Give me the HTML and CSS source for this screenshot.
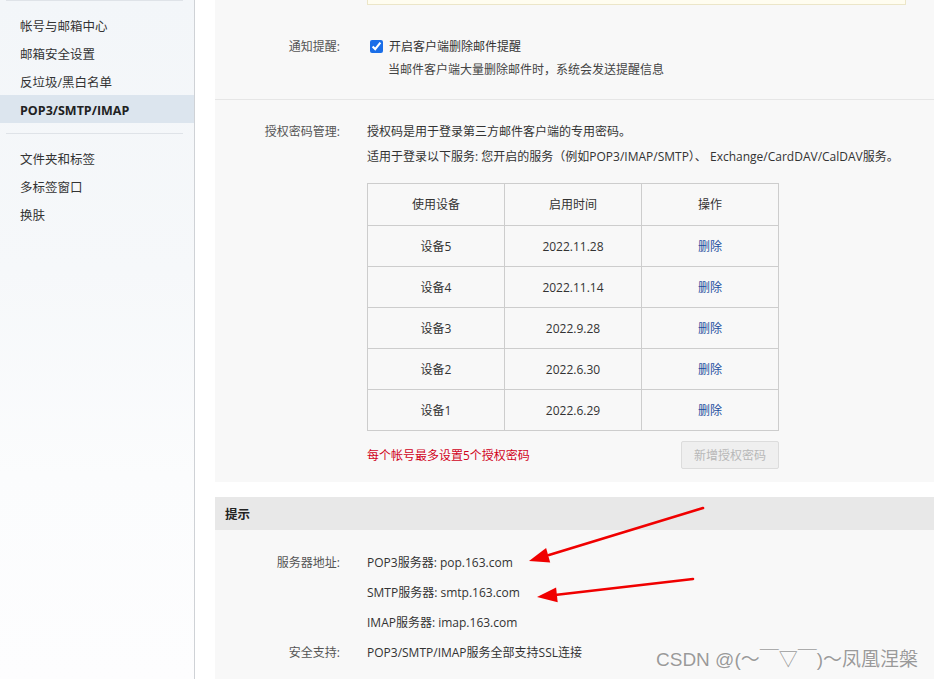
FILE: index.html
```html
<!DOCTYPE html>
<html lang="zh-CN">
<head>
<meta charset="utf-8">
<title>POP3/SMTP/IMAP 设置</title>
<link rel="stylesheet" href="styles.css">
</head>
<body>
<div class="app">
  <aside class="sidebar">
    <div class="side-line"></div>
    <ul class="side-group">
      <li class="side-item">帐号与邮箱中心</li>
      <li class="side-item">邮箱安全设置</li>
      <li class="side-item">反垃圾/黑白名单</li>
      <li class="side-item active">POP3/SMTP/IMAP</li>
    </ul>
    <div class="side-line mid"></div>
    <ul class="side-group">
      <li class="side-item">文件夹和标签</li>
      <li class="side-item">多标签窗口</li>
      <li class="side-item">换肤</li>
    </ul>
  </aside>
  <main class="main">
    <section class="panel">
      <div class="notice-box"></div>
      <div class="row row-notify">
        <div class="label">通知提醒:</div>
        <div class="content">
          <label class="check-line"><input type="checkbox" class="check" checked> 开启客户端删除邮件提醒</label>
          <div class="sub">当邮件客户端大量删除邮件时，系统会发送提醒信息</div>
        </div>
      </div>
      <div class="row row-auth">
        <div class="label">授权密码管理:</div>
        <div class="content">
          <p class="line">授权码是用于登录第三方邮件客户端的专用密码。</p>
          <p class="line">适用于登录以下服务: 您开启的服务（例如POP3/IMAP/SMTP）、 Exchange/CardDAV/CalDAV服务。</p>
          <table class="devices">
            <thead>
              <tr><th>使用设备</th><th>启用时间</th><th>操作</th></tr>
            </thead>
            <tbody>
              <tr><td>设备5</td><td>2022.11.28</td><td><a class="del">删除</a></td></tr>
              <tr><td>设备4</td><td>2022.11.14</td><td><a class="del">删除</a></td></tr>
              <tr><td>设备3</td><td>2022.9.28</td><td><a class="del">删除</a></td></tr>
              <tr><td>设备2</td><td>2022.6.30</td><td><a class="del">删除</a></td></tr>
              <tr><td>设备1</td><td>2022.6.29</td><td><a class="del">删除</a></td></tr>
            </tbody>
          </table>
          <div class="table-foot">
            <span class="warn">每个帐号最多设置5个授权密码</span>
            <button class="btn-disabled" disabled>新增授权密码</button>
          </div>
        </div>
      </div>
    </section>
    <section class="tips">
      <div class="tips-head">提示</div>
      <div class="tips-body">
        <div class="row row-tip">
          <div class="label">服务器地址:</div>
          <div class="content">
            <p class="tline">POP3服务器: pop.163.com</p>
            <p class="tline">SMTP服务器: smtp.163.com</p>
            <p class="tline">IMAP服务器: imap.163.com</p>
          </div>
        </div>
        <div class="row row-tip">
          <div class="label">安全支持:</div>
          <div class="content">
            <p class="tline">POP3/SMTP/IMAP服务全部支持SSL连接</p>
          </div>
        </div>
      </div>
    </section>
  </main>
</div>
<svg class="arrows" width="934" height="679" viewBox="0 0 934 679" aria-hidden="true">
  <line x1="703" y1="508" x2="549" y2="555" stroke="#f00000" stroke-width="2.6" stroke-linecap="round"/>
  <polygon points="529,561 550.2,562.4 546.1,548" fill="#f00000"/>
  <line x1="693" y1="579" x2="557" y2="594.7" stroke="#f00000" stroke-width="2.6" stroke-linecap="round"/>
  <polygon points="537,597 557.7,602.2 556.1,587.4" fill="#f00000"/>
</svg>
<div class="watermark">CSDN @(～￣▽￣)～凤凰涅槃</div>
</body>
</html>
```
FILE: styles.css
```css
* { box-sizing: border-box; }
html, body { margin: 0; padding: 0; }
body {
  width: 934px;
  height: 679px;
  overflow: hidden;
  background: #fff;
  font-family: "Open Sans", "Noto Sans CJK SC", sans-serif;
  font-size: 12px;
  color: #333;
  position: relative;
}
.app {
  display: flex;
  height: 679px;
}
.sidebar {
  width: 195px;
  flex: none;
  border-right: 1px solid #cfd2d6;
  background: linear-gradient(180deg, #f3f6f9 0%, #f6f8fa 40%, #fbfcfd 70%, #fdfdfe 100%);
}
.side-line {
  height: 1px;
  margin: 0 11px 0 6px;
  background: #dfe3e8;
}
.side-line.mid { margin-top: 10px; margin-bottom: 10px; }
.side-group {
  list-style: none;
  margin: 0;
  padding: 0;
}
.side-group:first-of-type { padding-top: 10px; }
.side-item {
  height: 28px;
  line-height: 28px;
  padding-top: 2px;
  padding-left: 20px;
  font-size: 12.5px;
  color: #333;
}
.side-item.active {
  background: #dce5ee;
  font-weight: bold;
  color: #222;
}
.main {
  flex: 1;
  padding-left: 20px;
  display: flex;
  flex-direction: column;
  gap: 15px;
}
.panel {
  background: #f8f8f8;
  padding-bottom: 13px;
}
.notice-box {
  margin-left: 152px;
  width: 539px;
  height: 5px;
  border: 1px solid #ece6c8;
  border-top: none;
  background: #fffdf0;
}
.row {
  display: flex;
  gap: 27px;
}
.label {
  width: 125px;
  flex: none;
  text-align: right;
  color: #555;
}
.content { flex: none; }
.row-notify {
  padding: 30px 0 18px;
  border-bottom: 1px solid #e6e6e6;
  line-height: 23px;
}
.check-line {
  display: flex;
  align-items: center;
  gap: 6px;
  color: #333;
}
.check {
  margin: 0 0 0 3px;
  width: 13px;
  height: 13px;
  accent-color: #1a6ee8;
}
.sub {
  padding-left: 21px;
  color: #444;
}
.row-auth {
  padding-top: 19px;
  line-height: 25px;
}
.line { margin: 0; color: #333; }
.devices {
  margin-top: 14px;
  border-collapse: collapse;
  width: 412px;
  background: #f8f8f8;
}
.devices th, .devices td {
  border: 1px solid #cdcdcd;
  width: 137px;
  text-align: center;
  font-weight: normal;
  color: #333;
  padding: 0;
}
.devices th { height: 42px; }
.devices td { height: 41px; }
.del { color: #1d4f9e; text-decoration: none; }
.table-foot {
  margin-top: 10px;
  width: 412px;
  display: flex;
  justify-content: space-between;
  align-items: center;
}
.warn { color: #d0021b; }
.btn-disabled {
  width: 98px;
  height: 28px;
  border: 1px solid #dcdcdc;
  border-radius: 2px;
  background: #efefef;
  color: #b8b8b8;
  font: inherit;
  padding: 0;
}
.tips { flex: 1; display: flex; flex-direction: column; }
.tips-head {
  height: 33px;
  line-height: 33px;
  padding-top: 1px;
  background: #e8e8e8;
  padding-left: 10px;
  font-size: 12.5px;
  font-weight: bold;
  color: #222;
}
.tips-body {
  flex: 1;
  background: #f8f8f8;
  padding-top: 18px;
}
.row-tip { line-height: 30px; }
.tline { margin: 0; color: #333; }
.arrows {
  position: absolute;
  left: 0;
  top: 0;
  pointer-events: none;
}
.watermark {
  position: absolute;
  left: 656px;
  top: 646px;
  font-family: "Liberation Sans", "Noto Sans CJK SC", sans-serif;
  font-size: 19px;
  line-height: 28px;
  color: #9a9a9a;
  text-shadow: 0 0 1px #fff, 0 0 2px #fff;
  white-space: nowrap;
}
```
